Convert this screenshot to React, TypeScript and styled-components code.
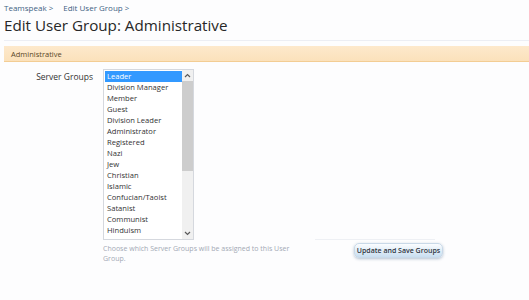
import React from "react";
import styled, { createGlobalStyle } from "styled-components";

const GlobalStyle = createGlobalStyle`
  html, body {
    margin: 0;
    padding: 0;
    background: #fdfdfe;
  }
  body {
    font-family: "Open Sans", "Noto Sans", sans-serif;
    color: #333;
  }
`;

const Page = styled.div`
  padding: 3px 0 0 4px;
`;

const Crumbs = styled.div`
  display: flex;
  gap: 10px;
  font-size: 8px;
  line-height: 10px;
  color: #3f6283;
`;

const Title = styled.h1`
  margin: 2px 0 0 0;
  font-size: 15.2px;
  line-height: 21px;
  font-weight: 400;
  color: #272727;
  padding-bottom: 4px;
  border-bottom: 1px solid #eceef4;
`;

const Heading = styled.div`
  margin-top: 5px;
  height: 15px;
  padding-left: 7px;
  display: flex;
  align-items: center;
  font-size: 7.5px;
  color: #5a4627;
  background: linear-gradient(#fde9cc, #fbe1bb);
  border-bottom: 1px solid #f3cd94;
`;

const FieldRow = styled.div`
  display: grid;
  grid-template-columns: 89px 1fr;
  column-gap: 10px;
  margin-top: 7px;
`;

const Label = styled.div`
  text-align: right;
  font-size: 8.5px;
  line-height: 14px;
  color: #333;
  padding-top: 1px;
`;

const Listbox = styled.div`
  display: flex;
  width: 91px;
  height: 171px;
  border: 1px solid #d5d8de;
  background: #fff;
  box-sizing: border-box;
`;

const Options = styled.div`
  flex: 1;
  padding: 1px 0 0 1px;
  overflow: hidden;
`;

const Option = styled.div<{ $selected?: boolean }>`
  height: 11px;
  line-height: 11px;
  font-size: 7.6px;
  padding-left: 2px;
  color: ${(p) => (p.$selected ? "#fff" : "#333")};
  background: ${(p) => (p.$selected ? "#3399ff" : "transparent")};
  white-space: nowrap;
`;

const Scrollbar = styled.div`
  width: 11px;
  display: flex;
  flex-direction: column;
  background: #f0f0f0;
`;

const Arrow = styled.div`
  height: 11px;
  display: flex;
  align-items: center;
  justify-content: center;
`;

const Thumb = styled.div`
  height: 90px;
  background: #cdcdcd;
`;

const Track = styled.div`
  flex: 1;
`;

const Hint = styled.div`
  margin-top: 4px;
  font-size: 7px;
  line-height: 10px;
  color: #a3a9b5;
  width: 190px;
`;

const Footer = styled.div`
  display: grid;
  grid-template-columns: 242px 1fr;
`;

const Submit = styled.div`
  display: flex;
  align-items: flex-start;
  margin-top: -1px;
  border-top: 1px solid #eef0f4;
  width: 81px;
  margin-left: -30px;
  padding: 3px 0 0 39px;
`;

const Button = styled.button`
  flex: none;
  width: 89px;
  height: 15px;
  padding: 0;
  border: 1px solid #c9d9e8;
  border-radius: 5px;
  background: linear-gradient(#fbfdff, #c9def0);
  box-shadow: 0 1px 3px rgba(90, 120, 150, 0.45);
  font-family: "Open Sans", "Noto Sans", sans-serif;
  font-size: 7px;
  font-weight: 600;
  color: #2d3440;
  white-space: nowrap;
`;

const groups = [
  "Leader",
  "Division Manager",
  "Member",
  "Guest",
  "Division Leader",
  "Administrator",
  "Registered",
  "Nazi",
  "Jew",
  "Christian",
  "Islamic",
  "Confucian/Taoist",
  "Satanist",
  "Communist",
  "Hinduism",
];

const Chevron = ({ up }: { up?: boolean }) => (
  <svg width="7" height="5" viewBox="0 0 7 5">
    <path
      d={up ? "M1 4L3.5 1.5L6 4" : "M1 1L3.5 3.5L6 1"}
      stroke="#5a5a5a"
      strokeWidth="1.2"
      fill="none"
    />
  </svg>
);

const App = () => {
  return (
    <Page>
      <GlobalStyle />
      <Crumbs>
        <span>Teamspeak &gt;</span>
        <span>Edit User Group &gt;</span>
      </Crumbs>
      <Title>Edit User Group: Administrative</Title>
      <Heading>Administrative</Heading>
      <FieldRow>
        <Label>Server Groups</Label>
        <div>
          <Listbox>
            <Options>
              {groups.map((g, i) => (
                <Option key={g} $selected={i === 0}>
                  {g}
                </Option>
              ))}
            </Options>
            <Scrollbar>
              <Arrow>
                <Chevron up />
              </Arrow>
              <Thumb />
              <Track />
              <Arrow>
                <Chevron />
              </Arrow>
            </Scrollbar>
          </Listbox>
          <Footer>
            <Hint>Choose which Server Groups will be assigned to this User Group.</Hint>
            <Submit>
              <Button>Update and Save Groups</Button>
            </Submit>
          </Footer>
        </div>
      </FieldRow>
    </Page>
  );
};

export default App;
